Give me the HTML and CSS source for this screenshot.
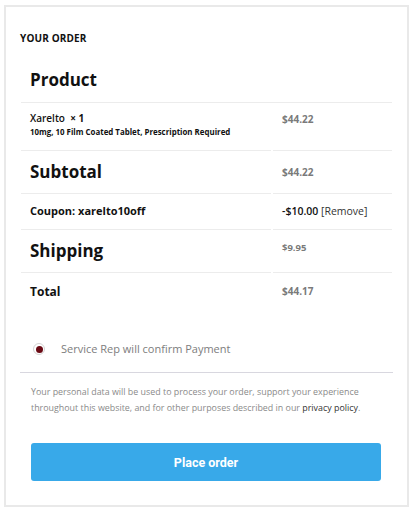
FILE: index.html
```html
<!DOCTYPE html>
<html>
<head>
<meta charset="utf-8">
<link rel="stylesheet" href="styles.css">
</head>
<body>
<div class="card">
  <h3 class="title">YOUR ORDER</h3>
  <table class="order">
    <thead>
      <tr><th class="head" colspan="2">Product</th></tr>
    </thead>
    <tbody>
      <tr class="item">
        <td class="name-cell">
          <div class="pname">Xarelto&nbsp; <strong>×&nbsp;1</strong></div>
          <div class="pmeta">10mg, 10 Film Coated Tablet, Prescription Required</div>
        </td>
        <td class="val">$44.22</td>
      </tr>
      <tr class="big">
        <td class="label-big">Subtotal</td>
        <td class="val">$44.22</td>
      </tr>
      <tr class="coupon">
        <td class="label-mid">Coupon: xarelto10off</td>
        <td class="val-coupon">-$10.00 <span class="remove">[Remove]</span></td>
      </tr>
      <tr class="big">
        <td class="label-big">Shipping</td>
        <td class="val small">$9.95</td>
      </tr>
      <tr class="total">
        <td class="label-total">Total</td>
        <td class="val">$44.17</td>
      </tr>
    </tbody>
  </table>

  <div class="payment">
    <label class="method">
      <span class="radio"><span class="dot"></span></span>
      <span class="method-text">Service Rep will confirm Payment</span>
    </label>
  </div>

  <div class="place">
    <p class="privacy">Your personal data will be used to process your order, support your experience throughout this website, and for other purposes described in our <a class="plink">privacy policy</a>.</p>
    <button class="btn">Place order</button>
  </div>
</div>
</body>
</html>
```
FILE: styles.css
```css
html, body {
  margin: 0;
  padding: 0;
  background: #ffffff;
}
body {
  font-family: "Open Sans", "Noto Sans", sans-serif;
  color: #111;
}
.card {
  margin: 5px 7px 0 4px;
  border: 2px solid #e9e9e9;
  padding: 24px 15px 0 14px;
  height: 474px;
  box-sizing: content-box;
}
.title {
  margin: 0;
  font-size: 10px;
  line-height: 14px;
  font-weight: 700;
  letter-spacing: 0.15px;
  color: #111;
}
.order {
  width: 375px;
  margin: 14px 0 0 -1px;
  border-collapse: separate;
  border-spacing: 2px 0;
}
.order th, .order td {
  text-align: left;
  padding-left: 9px;
  vertical-align: top;
}
.head {
  font-size: 17px;
  line-height: 24px;
  font-weight: 700;
  padding-top: 9px;
  padding-bottom: 10px;
  border-bottom: 1px solid #ececec;
}
.order td {
  border-top: 1px solid #ececec;
}
.order thead + tbody tr:first-child td {
  border-top: 0;
}
.name-cell {
  width: 240px;
  padding-top: 7px;
  padding-bottom: 12px;
}
.pname {
  font-size: 10px;
  line-height: 16px;
  font-weight: 600;
}
.pname strong {
  font-weight: 700;
}
.pmeta {
  font-size: 7.9px;
  line-height: 12px;
  font-weight: 700;
}
.val {
  color: #7a7a7a;
  font-size: 10px;
  line-height: 14px;
  font-weight: 700;
  padding-top: 9px;
}
.big .val {
  line-height: 22px;
  padding-top: 10px;
}
.big .val.small {
  font-size: 9.5px;
  line-height: 16px;
}
.label-big {
  font-size: 17px;
  line-height: 22px;
  font-weight: 700;
  padding-top: 10px;
  padding-bottom: 10px;
}
.label-mid {
  font-size: 11px;
  line-height: 14px;
  font-weight: 700;
  padding-top: 10px;
  padding-bottom: 11px;
}
.val-coupon {
  font-size: 10.5px;
  line-height: 14px;
  font-weight: 600;
  padding-top: 10px;
  color: #111;
}
.remove {
  font-weight: 400;
  color: #333;
}
.label-total {
  font-size: 12px;
  line-height: 18px;
  font-weight: 700;
  padding-top: 10px;
  padding-bottom: 10px;
}
.total .val {
  line-height: 18px;
  padding-top: 9px;
}
.payment {
  margin-top: 30px;
  border-bottom: 1px solid #d8d7df;
  padding: 0 0 15px 13px;
  margin-right: -1px;
}
.method {
  display: flex;
  align-items: center;
  gap: 16px;
}
.radio {
  width: 10px;
  height: 10px;
  border-radius: 50%;
  border: 1px solid #d3d3d3;
  display: flex;
  align-items: center;
  justify-content: center;
  background: #fff;
}
.dot {
  width: 7px;
  height: 7px;
  border-radius: 50%;
  background: #6a0a14;
}
.method-text {
  font-size: 11px;
  line-height: 16px;
  color: #7d7d7d;
}
.place {
  padding: 0 11px 0 11px;
}
.privacy {
  margin: 11px 0 0 0;
  font-size: 8.9px;
  line-height: 16px;
  color: #8a8a8a;
}
.plink {
  color: #333;
}
.btn {
  display: block;
  width: 100%;
  margin-top: 27px;
  height: 38px;
  border: 0;
  border-radius: 3px;
  background: #38a9e9;
  color: #fff;
  font-family: Roboto, "Liberation Sans", sans-serif;
  font-weight: 700;
  font-size: 12.5px;
}
```
